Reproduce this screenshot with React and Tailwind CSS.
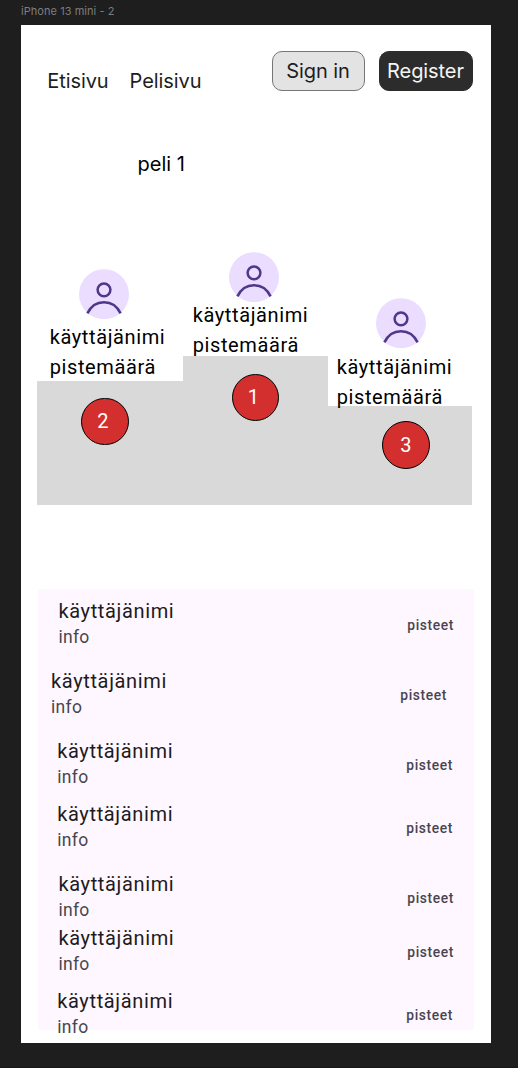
const inter = "font-['Inter',sans-serif]";

function Avatar({ className }) {
  return (
    <svg className={`h-[50px] w-[50px] shrink-0 ${className}`} viewBox="0 0 50 50" fill="none">
      <circle cx="25" cy="25.200" r="25" fill="#EADDFF" />
      <circle cx="25" cy="20.800" r="6.4" stroke="#4F378A" strokeWidth="2.5" />
      <path d="M8.400 44.400C11.700 37.400 17.600 33.200 25 33.200s13.300 4.200 16.600 11.200" stroke="#4F378A" strokeWidth="2.5" />
    </svg>
  );
}

function Step({ rank, avatar, text, block, badge, digit }) {
  return (
    <div className="flex flex-col">
      <Avatar className={avatar} />
      <div className={`relative text-[20.05px] leading-[30px] tracking-[0.6px] whitespace-nowrap text-black ${text}`}>
        <p>käyttäjänimi</p>
        <p>pistemäärä</p>
      </div>
      <div className={`bg-[#d9d9d9] ${block}`}>
        <div className={`flex h-[47.5px] w-[47.5px] items-center justify-center rounded-full border-[1.25px] border-black bg-[#d32f2f] text-[20px] leading-none text-white ${badge}`}>
          <span className={digit}>{rank}</span>
        </div>
      </div>
    </div>
  );
}

const rows = [
  "h-[70px] pl-[20.4px] pr-[20px]",
  "h-[70px] pl-[13px] pr-[27px]",
  "h-[63px] pl-[19.2px] pr-[21px]",
  "h-[70px] pl-[19.2px] pr-[21px]",
  "h-[54px] pl-[20.4px] pr-[20px]",
  "h-[63px] pl-[20.4px] pr-[20px]",
  "h-[54px] pl-[19.2px] pr-[21px]",
];

export default function App() {
  return (
    <div className="h-[1068px] w-[518px] overflow-hidden bg-[#1e1e1e] font-['Roboto',sans-serif]">
      <div className={`${inter} flex h-[25px] items-center pb-[3px] pl-[21px] text-[11px] leading-none tracking-[0.05px] text-[#7d7d7d]`}>
        iPhone 13 mini - 2
      </div>
      <main className="ml-[21px] h-[1018px] w-[470px] bg-white">
        <header className={`${inter} flex h-[100px] items-start pt-[26px] text-[20.05px] leading-none tracking-[-0.1px] text-[#1e1e1e]`}>
          <nav className="flex w-[250.5px] gap-[21px] pt-[20px] pl-[26.3px]">
            <a>Etisivu</a>
            <a>Pelisivu</a>
          </nav>
          <button className="flex h-[40px] w-[93px] items-center justify-center rounded-[10px] border border-[#767676] bg-[#e3e3e3] tracking-[-0.1px]">
            Sign in
          </button>
          <button className="ml-[14px] flex h-[40px] w-[94px] items-center justify-center rounded-[10px] border border-[#2c2c2c] bg-[#2c2c2c] tracking-[-0.1px] text-[#f5f5f5]">
            Register
          </button>
        </header>
        <h1 className={`${inter} h-[102px] pt-[27px] pl-[116.5px] text-[20.05px] leading-[24px] text-black`}>peli 1</h1>
        <section className="ml-[16px] grid h-[278px] w-[435px] grid-cols-[146px_145px_144px] items-end">
          <Step rank={2} avatar="ml-[41.6px]" text="mt-[3px] ml-[12.7px]" block="h-[124px] -mt-[1px]" badge="mt-[16.5px] ml-[44px]" digit="-ml-[4px] -mt-[1px]" />
          <Step rank={1} avatar="ml-[46px]" text="-mt-[2px] ml-[9.7px]" block="h-[149px] -mt-[4px]" badge="mt-[17.5px] ml-[48.500px]" digit="-ml-[4px]" />
          <Step rank={3} avatar="ml-[47.6px]" text="mt-[4px] ml-[8.7px]" block="h-[99px] -mt-[6px]" badge="mt-[15px] ml-[54px]" digit="mt-[1px]" />
        </section>
        <ul className="mt-[84px] ml-[17px] h-[441px] w-[436px] bg-[#fef7ff] pt-[7px]">
          {rows.map((row, i) => (
            <li key={i} className={`flex items-start justify-between ${row}`}>
              <div className="whitespace-nowrap">
                <p className="text-[20.05px] leading-[30px] tracking-[0.627px] text-[#1d1b20]">käyttäjänimi</p>
                <p className="-mt-[1px] text-[17.5px] leading-[24px] tracking-[0.313px] text-[#49454f]">info</p>
              </div>
              <span className="mt-[19px] text-[13.8px] leading-[20px] font-medium tracking-[0.627px] text-[#49454f]">pisteet</span>
            </li>
          ))}
        </ul>
      </main>
      <div className="mt-[24px] h-px bg-[#1d141c]" />
    </div>
  );
}
